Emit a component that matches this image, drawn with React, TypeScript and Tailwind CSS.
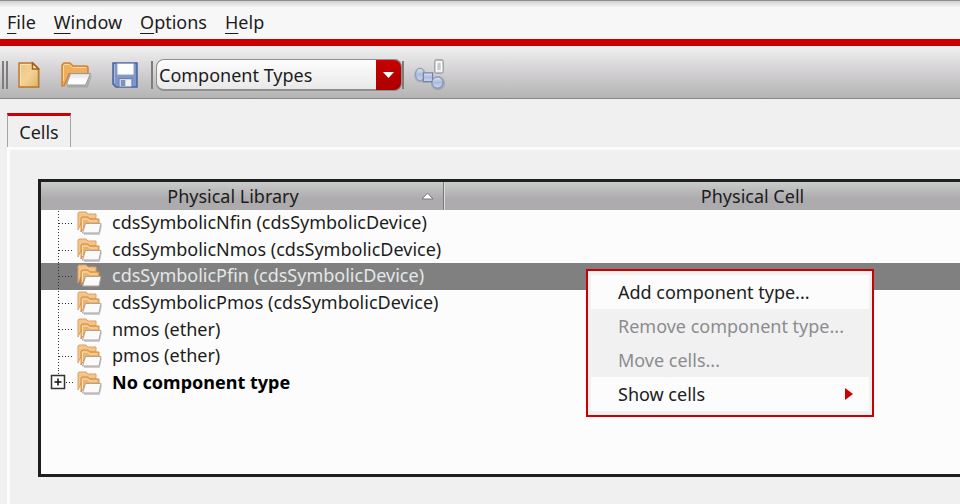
import React from "react";

const menus = ["File", "Window", "Options", "Help"];

const rows = [
  { name: "cdsSymbolicNfin (cdsSymbolicDevice)" },
  { name: "cdsSymbolicNmos (cdsSymbolicDevice)" },
  { name: "cdsSymbolicPfin (cdsSymbolicDevice)", selected: true },
  { name: "cdsSymbolicPmos (cdsSymbolicDevice)" },
  { name: "nmos (ether)" },
  { name: "pmos (ether)" },
  { name: "No component type", group: true },
];

const contextItems = [
  { label: "Add component type..." },
  { label: "Remove component type...", disabled: true },
  { label: "Move cells...", disabled: true },
  { label: "Show cells", submenu: true },
];

function NewIcon() {
  return (
    <svg width="24" height="28" viewBox="0 0 24 28" aria-hidden="true">
      <defs>
        <linearGradient id="paper" x1="0" y1="0" x2="1" y2="1">
          <stop offset="0" stopColor="#efc07c" />
          <stop offset="0.5" stopColor="#f1d396" />
          <stop offset="1" stopColor="#e2b45f" />
        </linearGradient>
      </defs>
      <path d="M1 3h14l7 7v17H1z" fill="#8d8a88" opacity="0.4" />
      <path d="M1 2h14l5.500 5.500V26H1z" fill="url(#paper)" stroke="#c07a2c" strokeWidth="1.500" />
      <path d="M2.500 24V3.500H13" fill="none" stroke="#fbe3b6" />
      <path d="M14.500 2v6h6z" fill="#fff0d0" stroke="#a35d1c" strokeWidth="1.500" />
    </svg>
  );
}

function OpenIcon() {
  return (
    <svg width="32" height="28" viewBox="0 0 32 28" aria-hidden="true">
      <defs>
        <linearGradient id="sheet" x1="0" y1="0" x2="0" y2="1">
          <stop offset="0" stopColor="#dedee2" />
          <stop offset="0.6" stopColor="#fff" />
        </linearGradient>
      </defs>
      <path d="M6 25.500h20l4-11" fill="none" stroke="#777" strokeWidth="2" opacity="0.35" />
      <path d="M1 25V4l2-2h6l3 3h13q2 0 2 2v6H8l-5 12z" fill="#edae5e" stroke="#cf8536" strokeWidth="1.500" />
      <path d="M2.500 20V5l1-1.500h5l3 3H25" fill="none" stroke="#fbd8a0" />
      <path d="M9.500 12.500H29.500l-5 11.500H5.500z" fill="url(#sheet)" stroke="#98989c" />
    </svg>
  );
}

function SaveIcon() {
  return (
    <svg width="28" height="28" viewBox="0 0 28 28" aria-hidden="true">
      <path d="M2 2h24v24H5l-3-3z" fill="#7f97c6" stroke="#4763a0" strokeWidth="1.500" />
      <path d="M3.500 22V3.500" stroke="#a9bbdd" />
      <path d="M6 2.500h17V14H6z" fill="#fdfdff" stroke="#8fa3cb" />
      <path d="M8 17.500h13V26H8z" fill="#cfd3dc" stroke="#6980b0" />
      <path d="M10 19h4v6h-4z" fill="#7d90b8" />
      <path d="M15 19h5v6h-5z" fill="#eff0f4" />
    </svg>
  );
}

function ComponentsIcon() {
  return (
    <svg width="32" height="32" viewBox="0 0 32 32" aria-hidden="true">
      <defs>
        <linearGradient id="node" x1="0" y1="0" x2="0" y2="1">
          <stop offset="0" stopColor="#dde5f3" />
          <stop offset="0.5" stopColor="#a9bbde" />
          <stop offset="1" stopColor="#cfd9ec" />
        </linearGradient>
      </defs>
      <ellipse cx="6" cy="16" rx="6" ry="7.500" fill="#8b8e98" opacity="0.4" />
      <ellipse cx="6" cy="15.500" rx="4.500" ry="6" fill="url(#node)" stroke="#8798bc" />
      <rect x="8.500" y="13" width="11" height="11" fill="#7889ad" opacity="0.5" />
      <rect x="9.500" y="14" width="9" height="8.500" fill="url(#node)" stroke="#6f83ae" />
      <circle cx="24" cy="24" r="7" fill="#777d8b" opacity="0.4" />
      <circle cx="23.500" cy="23.500" r="5.500" fill="url(#node)" stroke="#7b8db4" />
      <rect x="20.500" y="0.500" width="9" height="14" rx="2" fill="#b9babb" stroke="#a6a7a9" />
      <rect x="22.500" y="3" width="5" height="9" fill="#c9cacb" stroke="#fff" strokeWidth="1.500" />
    </svg>
  );
}

function FoldersIcon() {
  return (
    <svg width="25" height="24" viewBox="0 0 25 24" className="shrink-0" aria-hidden="true">
      <path d="M1 19V2l1-1h7l2 2h8v5H6z" fill="#f3c48c" stroke="#dda162" />
      <path d="M4 21V7l1-1h6l2 2h9v6H8z" fill="#efb166" stroke="#d08e45" />
      <path d="M5.500 18V8h5l2 2h8" fill="none" stroke="#fbe0b8" />
      <path d="M7 23h15l2-9" fill="none" stroke="#888" strokeWidth="2" opacity="0.4" />
      <path d="M8.500 12.500H24l-2 9.500H5.500z" fill="#fafafa" stroke="#b0a19a" />
    </svg>
  );
}

function Branch({ group }: { group?: boolean }) {
  return (
    <svg width="36" height="27" viewBox="0 0 36 27" className="shrink-0 self-start" aria-hidden="true">
      <path d={group ? "M17.500 1v6" : "M17.500 1v26"} stroke="#333" strokeDasharray="1 2" />
      <path d={group ? "M25 13.500h8" : "M18 13.500h14"} stroke="#333" strokeDasharray="1 2" />
      {group && (
        <>
          <rect x="10.500" y="6.500" width="13" height="13" fill="#fcfcfc" stroke="#333" strokeWidth="1.500" />
          <path d="M13.500 13h7M17 9.500v7" stroke="#111" strokeWidth="1.500" />
        </>
      )}
    </svg>
  );
}

function Grip() {
  return <span className="block h-7 w-[2px] shrink-0 bg-[#7d7d7d]" />;
}

function ContextMenu() {
  return (
    <div
      role="menu"
      className="absolute top-[6px] left-[545px] z-10 w-72 border-2 border-[#cc0000] bg-[#f2f1f2] px-[3px] pt-1 pb-1 text-[#202020]"
    >
      {contextItems.map((item) => (
        <button
          key={item.label}
          type="button"
          role="menuitem"
          disabled={item.disabled}
          className="flex h-[34px] w-full items-center justify-between bg-[#fcfcfc] pr-4 pb-px pl-[27px] text-left whitespace-nowrap disabled:bg-[#f2f1f2] disabled:text-[#8c8c8e]"
        >
          {item.label}
          {item.submenu && (
            <svg width="8" height="12" viewBox="0 0 8 12" aria-hidden="true">
              <path d="M0 0l8 6-8 6z" fill="#cc0000" />
            </svg>
          )}
        </button>
      ))}
    </div>
  );
}

export default function App() {
  return (
    <div className="flex min-h-screen flex-col overflow-hidden bg-[#f1f0f1] font-['Noto_Sans',sans-serif] text-lg leading-6 text-[#1c1c1c]">
      <div className="h-[7px] border-t border-[#8e8e8e] bg-linear-to-b from-[#cfd1d2] to-[#f3f3f4]" />
      <nav className="flex h-8 items-center gap-[18px] bg-[#f8f7f8] px-[7px] pb-[2px]">
        {menus.map((m) => (
          <button key={m} type="button" className="leading-6">
            <span className="underline decoration-1 underline-offset-4">{m[0]}</span>
            {m.slice(1)}
          </button>
        ))}
      </nav>
      <div className="h-[7px] bg-[#cc0000]" />

      <div
        role="toolbar"
        className="flex h-[53px] items-center border-b border-[#858585] bg-linear-to-b from-[#f2f1f2] via-[#cfcdcf] via-55% to-[#b3b4b3] pt-[5px] pl-[2px]"
      >
        <div className="flex gap-[2px]">
          <Grip />
          <Grip />
        </div>
        <button type="button" aria-label="New" className="ml-[10px]">
          <NewIcon />
        </button>
        <button type="button" aria-label="Open" className="ml-[19px]">
          <OpenIcon />
        </button>
        <button type="button" aria-label="Save" className="ml-[18px]">
          <SaveIcon />
        </button>
        <div className="ml-3">
          <Grip />
        </div>
        <div className="relative ml-[3px] flex">
          <select
            aria-label="View"
            className="h-8 w-[246px] appearance-none rounded-lg border border-b-2 border-[#8f8f8f] bg-linear-to-b from-[#fdfdfd] to-[#e9e9e9] pt-[2px] pl-[2px] text-lg leading-6"
          >
            <option>Component Types</option>
          </select>
          <span className="pointer-events-none absolute top-0 right-0 flex h-8 w-[26px] items-center justify-center rounded-r-lg border-y border-r border-[#8f8f8f] bg-linear-to-b from-[#c80000] to-[#aa0000]">
            <svg width="11" height="6" viewBox="0 0 11 6" aria-hidden="true">
              <path d="M0 0h11L5.500 6z" fill="#fff" />
            </svg>
          </span>
        </div>
        <Grip />
        <button type="button" aria-label="Show components" className="ml-[10px]">
          <ComponentsIcon />
        </button>
      </div>

      <div role="tablist" className="flex px-[7px] pt-[14px]">
        <button
          type="button"
          role="tab"
          aria-selected="true"
          className="h-[34px] w-16 border-x border-t-[3px] border-x-[#a5a5a5] border-t-[#cc0000]"
        >
          Cells
        </button>
      </div>

      <main className="ml-[7px] grow border-t-[3px] border-l-[3px] border-[#fcfcfc] pt-[29px] pb-[26px] pl-7">
        <div className="h-[298px] overflow-hidden border-y-[3px] border-l-[3px] border-[#1d1f1e] bg-[#fcfcfc]">
          <table role="treegrid" className="block w-full">
            <thead className="block">
              <tr className="grid h-7 grid-cols-[403px_minmax(616px,1fr)] bg-linear-to-b from-[#c9cbcb] to-[#adabad] to-60%">
                <th className="flex items-center border-r border-[#777] pr-[9px] font-normal">
                  <span className="grow pl-1 text-center">Physical Library</span>
                  <svg width="13" height="8" viewBox="0 0 13 8" aria-hidden="true">
                    <path d="M1 7l5.500-6L12 7z" fill="#fff" stroke="#777" />
                  </svg>
                </th>
                <th className="flex items-center justify-center border-l border-[#dddddd] font-normal">
                  Physical Cell
                </th>
              </tr>
            </thead>
            <tbody className="grid h-[186px] grid-rows-7">
              {rows.map((row) => (
                <tr
                  key={row.name}
                  aria-selected={!!row.selected}
                  className={
                    row.selected
                      ? "relative grid min-h-0 bg-[#808080] text-[#e4e8e8]"
                      : "grid min-h-0"
                  }
                >
                  <td className={row.group ? "flex min-h-0 items-center font-bold text-black" : "flex min-h-0 items-center"}>
                    <Branch group={row.group} />
                    <FoldersIcon />
                    <span className="pb-[2px] pl-[10px] whitespace-nowrap">{row.name}</span>
                    {row.selected && <ContextMenu />}
                  </td>
                </tr>
              ))}
            </tbody>
          </table>
        </div>
      </main>
    </div>
  );
}
